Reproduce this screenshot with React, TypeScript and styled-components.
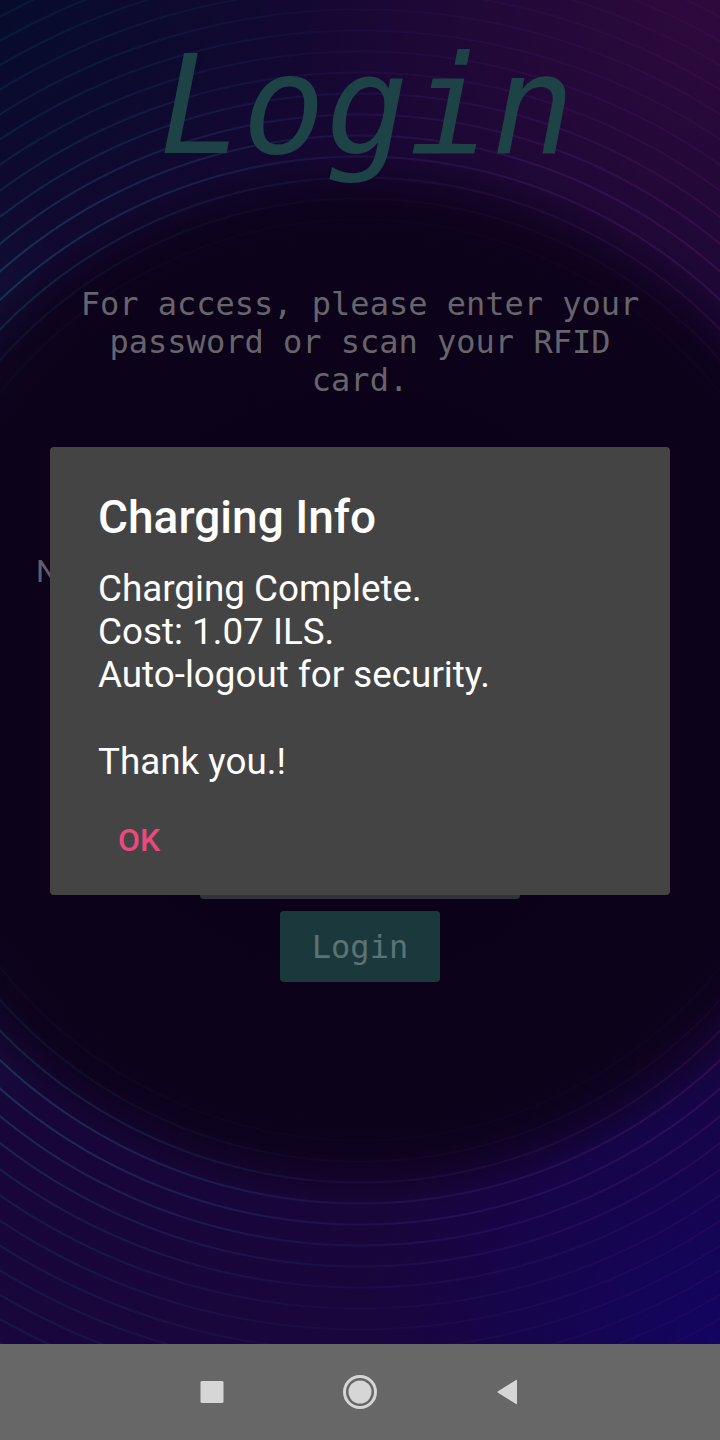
import React from "react";
import styled, { createGlobalStyle } from "styled-components";

const GlobalStyle = createGlobalStyle`
  html, body {
    margin: 0;
    padding: 0;
    background: #0a0018;
  }
  * { box-sizing: border-box; }
`;

const Page = styled.div`
  width: 720px;
  height: 1440px;
  display: flex;
  flex-direction: column;
  overflow: hidden;
`;

const Screen = styled.main`
  position: relative;
  height: 1344px;
  display: flex;
  flex-direction: column;
  align-items: center;
  overflow: hidden;
  background:
    radial-gradient(circle at 720px 0px, rgba(48, 10, 62, 0.9) 0px, rgba(48, 10, 62, 0) 420px),
    radial-gradient(circle at 0px 0px, rgba(6, 12, 44, 1) 0px, rgba(6, 12, 44, 0) 380px),
    radial-gradient(circle at 720px 1344px, rgba(18, 4, 96, 1) 0px, rgba(18, 4, 96, 0) 360px),
    linear-gradient(180deg, #170733 0%, #150532 50%, #19063c 100%);

  &::before {
    content: "";
    position: absolute;
    inset: 0;
    background:
      linear-gradient(90deg, rgba(30, 160, 175, 0.9) 0%, rgba(60, 70, 160, 0.6) 45%, rgba(140, 40, 160, 0.7) 100%);
    -webkit-mask-image:
      repeating-radial-gradient(circle at 360px 680px, transparent 0px, transparent 18px, #000 19px, #000 20px, transparent 21px),
      radial-gradient(circle at 360px 680px, #000 470px, rgba(0, 0, 0, 0.35) 620px, rgba(0, 0, 0, 0.12) 900px);
    -webkit-mask-composite: source-in;
    mask-image:
      repeating-radial-gradient(circle at 360px 680px, transparent 0px, transparent 18px, #000 19px, #000 20px, transparent 21px),
      radial-gradient(circle at 360px 680px, #000 470px, rgba(0, 0, 0, 0.35) 620px, rgba(0, 0, 0, 0.12) 900px);
    mask-composite: intersect;
    opacity: 0.45;
  }

  &::after {
    content: "";
    position: absolute;
    inset: 0;
    background:
      radial-gradient(circle at 360px 680px, #0b0118 0px, #0c0219 430px, rgba(12, 2, 26, 0.85) 475px, rgba(12, 2, 26, 0) 530px),
      radial-gradient(ellipse 110px 480px at 0px 660px, rgba(14, 80, 100, 0.3) 0%, rgba(14, 80, 100, 0) 100%);
  }
`;

const Content = styled.div`
  position: relative;
  z-index: 1;
  width: 100%;
  display: flex;
  flex-direction: column;
  align-items: center;
`;

const Title = styled.h1`
  margin: 26px 0 0 14px;
  font-family: "DejaVu Sans Mono", "Liberation Mono", monospace;
  font-style: italic;
  font-weight: normal;
  font-size: 138px;
  line-height: 160px;
  color: #1d4346;
  text-align: center;
`;

const Description = styled.p`
  margin: 99px 0 0;
  width: 600px;
  font-family: "DejaVu Sans Mono", "Liberation Mono", monospace;
  font-size: 32px;
  line-height: 38px;
  color: #67646c;
  text-align: center;
`;

const FieldLabel = styled.div`
  align-self: stretch;
  margin-top: 154px;
  padding-left: 36px;
  font-family: Roboto, "Noto Sans", sans-serif;
  font-size: 31px;
  color: #615d66;
  white-space: nowrap;
`;

const Field = styled.div`
  margin-top: 259px;
  width: 320px;
  height: 50px;
  border-radius: 4px;
  background: #34313f;
`;

const LoginButton = styled.button`
  margin-top: 12px;
  width: 160px;
  height: 71px;
  border: none;
  border-radius: 4px;
  background: #1b393c;
  font-family: "DejaVu Sans Mono", "Liberation Mono", monospace;
  font-size: 32px;
  color: #5a7374;
  padding: 0;
`;

const Overlay = styled.div`
  position: absolute;
  inset: 0;
  z-index: 2;
  display: flex;
  align-items: center;
  justify-content: center;
`;

const Dialog = styled.section`
  width: 620px;
  margin-top: -2px;
  background: #444444;
  border-radius: 4px;
  padding: 43px 48px 36px;
  display: flex;
  flex-direction: column;
  align-items: flex-start;
  font-family: Roboto, "Noto Sans", sans-serif;
`;

const DialogTitle = styled.h2`
  margin: 0;
  font-size: 46px;
  font-weight: 500;
  color: #ffffff;
  line-height: normal;
`;

const DialogBody = styled.p`
  margin: 23px 0 0;
  font-size: 36.8px;
  line-height: 43.1px;
  color: #ffffff;
  white-space: pre-line;
`;

const DialogAction = styled.button`
  margin: 38px 0 0 0;
  padding: 0 20px;
  border: none;
  background: transparent;
  font-family: Roboto, "Noto Sans", sans-serif;
  font-size: 32px;
  font-weight: 500;
  line-height: normal;
  color: #e9497e;
`;

const NavBar = styled.nav`
  height: 96px;
  background: #676767;
  display: flex;
  align-items: center;
  justify-content: center;
`;

const NavSlot = styled.div`
  width: 148px;
  display: flex;
  align-items: center;
  justify-content: center;
`;

const SquareIcon = () => (
  <svg width="26" height="26" viewBox="0 0 26 26">
    <rect x="1.5" y="2" width="23" height="22" rx="1.5" fill="#d6d6d6" />
  </svg>
);

const HomeIcon = () => (
  <svg width="36" height="36" viewBox="0 0 36 36">
    <circle cx="18" cy="18" r="15.5" fill="none" stroke="#d6d6d6" strokeWidth="3" />
    <circle cx="18" cy="18" r="11.5" fill="#d6d6d6" />
  </svg>
);

const BackIcon = () => (
  <svg width="26" height="28" viewBox="0 0 26 28">
    <path d="M22 2.5 L22 25.5 Q22 26.5 21 26 L3 14.8 Q2.2 14 3 13.2 L21 2 Q22 1.5 22 2.5 Z" fill="#d6d6d6" />
  </svg>
);

export default function App() {
  return (
    <>
      <GlobalStyle />
      <Page>
        <Screen>
          <Content>
            <Title>Login</Title>
            <Description>
              For access, please enter your password or scan your RFID card.
            </Description>
            <FieldLabel>N</FieldLabel>
            <Field />
            <LoginButton>Login</LoginButton>
          </Content>
          <Overlay>
            <Dialog>
              <DialogTitle>Charging Info</DialogTitle>
              <DialogBody>
                {"Charging Complete.\nCost: 1.07 ILS.\nAuto-logout for security.\n\nThank you.!"}
              </DialogBody>
              <DialogAction>OK</DialogAction>
            </Dialog>
          </Overlay>
        </Screen>
        <NavBar>
          <NavSlot><SquareIcon /></NavSlot>
          <NavSlot><HomeIcon /></NavSlot>
          <NavSlot><BackIcon /></NavSlot>
        </NavBar>
      </Page>
    </>
  );
}
